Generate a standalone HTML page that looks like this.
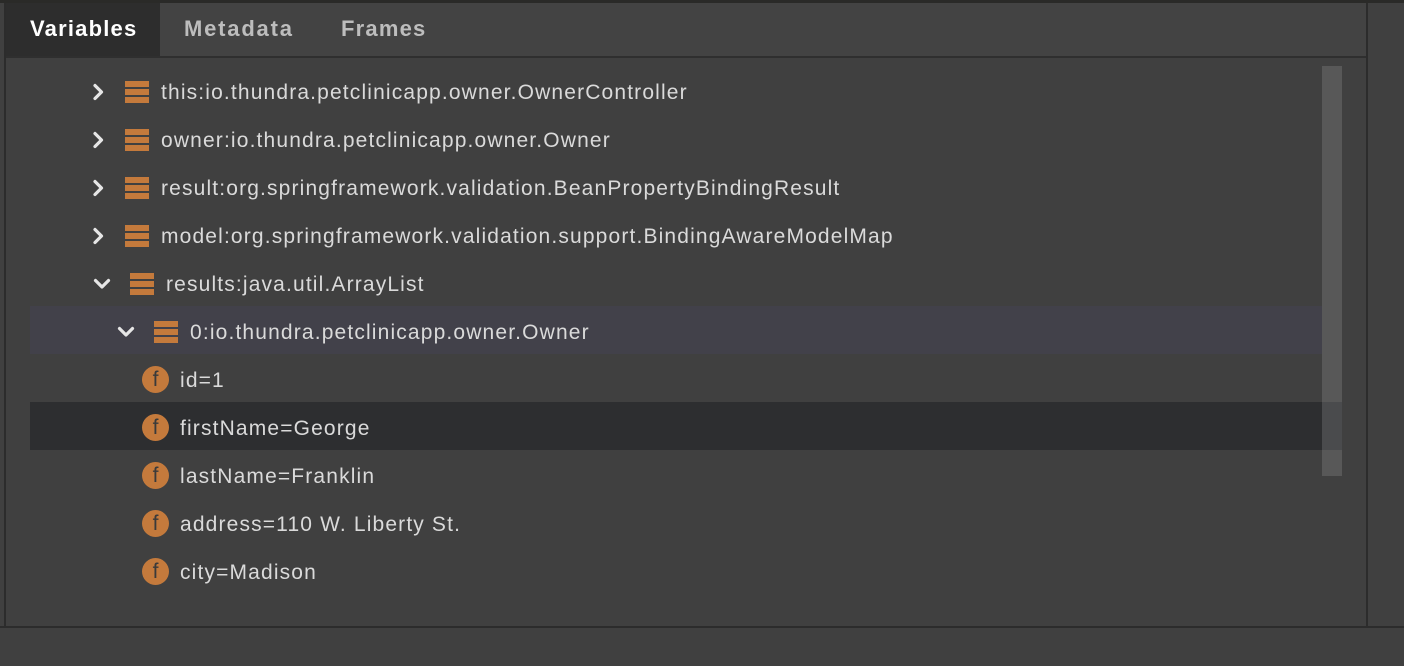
<!DOCTYPE html>
<html><head><style>
*{margin:0;padding:0;box-sizing:border-box}
body{width:1404px;height:666px;background:#404040;position:relative;overflow:hidden;font-family:"Liberation Sans",sans-serif}
.a{position:absolute}
.row{position:absolute;left:30px;width:1312px;height:48px}
.t{position:absolute;top:13px;font-size:21px;letter-spacing:1.15px;color:#dadada;white-space:nowrap;line-height:24px}
.ch{position:absolute;top:15px;width:18px;height:18px}
.st{position:absolute;top:13px;width:24px;height:22px}
.st i{position:absolute;left:0;width:24px;height:6px;background:#c47a3c}
.f{position:absolute;top:10px;width:27px;height:27px;border-radius:50%;background:#c47a3c;color:#3a3a3a;font-size:21px;text-align:center;line-height:27px}
.tab{position:absolute;top:16px;font-size:22px;font-weight:bold;letter-spacing:1.2px}
</style></head><body>
<div class="a" style="left:0;top:0;width:1404px;height:3px;background:#2a2a28"></div>
<div class="a" style="left:4px;top:3px;width:2px;height:623px;background:#2c2c2c"></div>
<div class="a" style="left:6px;top:3px;width:1360px;height:53px;background:#434343"></div>
<div class="a" style="left:6px;top:3px;width:154px;height:53px;background:#2d2d2d"></div>
<div class="a" style="left:6px;top:56px;width:1360px;height:2px;background:#2f2f2f"></div>
<div class="a" style="left:1366px;top:3px;width:2px;height:623px;background:#2c2c2c"></div>
<div class="a" style="left:0;top:626px;width:1404px;height:2px;background:#2c2c2c"></div>
<div class="tab" style="left:30px;color:#fff">Variables</div>
<div class="tab" style="left:184px;color:#bdbdbd;letter-spacing:1.8px">Metadata</div>
<div class="tab" style="left:341px;color:#bdbdbd">Frames</div>

<div class="row" style="top:306px;width:1292px;background:#42414a"></div>
<div class="row" style="top:402px;background:#2d2e30"></div>
<div class="a" style="left:1322px;top:66px;width:20px;height:410px;background:#585858"></div>
<div class="a" style="left:1322px;top:402px;width:20px;height:48px;background:#4a4b4d"></div>

<svg width="0" height="0" style="position:absolute"><defs>
<path id="r" d="M5 2.5 L11.5 9 L5 15.5" fill="none" stroke="#e6e6e6" stroke-width="3.2" stroke-linecap="round" stroke-linejoin="round"/>
<path id="d" d="M2.5 5.5 L9 12 L15.5 5.5" fill="none" stroke="#e6e6e6" stroke-width="3.2" stroke-linecap="round" stroke-linejoin="round"/>
</defs></svg>

<div class="row" style="top:68px"><svg class="ch" style="left:60px"><use href="#r"/></svg><div class="st" style="left:95px"><i style="top:0"></i><i style="top:8px"></i><i style="top:16px"></i></div><div class="t" style="left:131px">this:io.thundra.petclinicapp.owner.OwnerController</div></div>
<div class="row" style="top:116px"><svg class="ch" style="left:60px"><use href="#r"/></svg><div class="st" style="left:95px"><i style="top:0"></i><i style="top:8px"></i><i style="top:16px"></i></div><div class="t" style="left:131px">owner:io.thundra.petclinicapp.owner.Owner</div></div>
<div class="row" style="top:164px"><svg class="ch" style="left:60px"><use href="#r"/></svg><div class="st" style="left:95px"><i style="top:0"></i><i style="top:8px"></i><i style="top:16px"></i></div><div class="t" style="left:131px">result:org.springframework.validation.BeanPropertyBindingResult</div></div>
<div class="row" style="top:212px"><svg class="ch" style="left:60px"><use href="#r"/></svg><div class="st" style="left:95px"><i style="top:0"></i><i style="top:8px"></i><i style="top:16px"></i></div><div class="t" style="left:131px">model:org.springframework.validation.support.BindingAwareModelMap</div></div>
<div class="row" style="top:260px"><svg class="ch" style="left:63px"><use href="#d"/></svg><div class="st" style="left:100px"><i style="top:0"></i><i style="top:8px"></i><i style="top:16px"></i></div><div class="t" style="left:136px">results:java.util.ArrayList</div></div>
<div class="row" style="top:308px"><svg class="ch" style="left:87px"><use href="#d"/></svg><div class="st" style="left:124px"><i style="top:0"></i><i style="top:8px"></i><i style="top:16px"></i></div><div class="t" style="left:160px">0:io.thundra.petclinicapp.owner.Owner</div></div>
<div class="row" style="top:356px"><div class="f" style="left:112px">f</div><div class="t" style="left:150px">id=1</div></div>
<div class="row" style="top:404px"><div class="f" style="left:112px">f</div><div class="t" style="left:150px">firstName=George</div></div>
<div class="row" style="top:452px"><div class="f" style="left:112px">f</div><div class="t" style="left:150px">lastName=Franklin</div></div>
<div class="row" style="top:500px"><div class="f" style="left:112px">f</div><div class="t" style="left:150px">address=110 W. Liberty St.</div></div>
<div class="row" style="top:548px"><div class="f" style="left:112px">f</div><div class="t" style="left:150px">city=Madison</div></div>
</body></html>
